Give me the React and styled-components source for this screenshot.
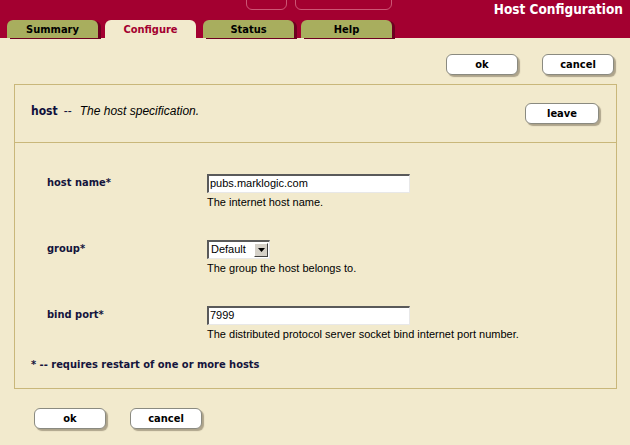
import React from "react";
import styled, { createGlobalStyle } from "styled-components";

const Global = createGlobalStyle`
  html, body { margin: 0; padding: 0; background: #f2eacd; }
  body { width: 630px; height: 445px; overflow: hidden; font-family: "Liberation Sans", Arial, sans-serif; }
`;

const tahoma = `"DejaVu Sans Condensed", "DejaVu Sans", Verdana, sans-serif`;

const Page = styled.div`
  display: flex;
  flex-direction: column;
  width: 630px;
  height: 445px;
  background: #f2eacd;
`;

const Header = styled.div`
  background: #a30030;
  height: 38px;
  display: flex;
  flex-direction: column;
`;

const TopRow = styled.div`
  height: 20px;
  display: flex;
  align-items: flex-start;
  padding-left: 246px;
  padding-right: 7px;
`;

const Deco = styled.div`
  width: ${(p) => p.$w}px;
  height: 16px;
  margin-top: -8px;
  margin-right: ${(p) => p.$mr || 0}px;
  border: 1px solid rgba(255, 190, 200, 0.45);
  border-radius: 6px;
`;

const Title = styled.div`
  margin-left: auto;
  margin-top: 1px;
  color: #ffffff;
  font-family: ${tahoma};
  font-stretch: condensed;
  font-weight: bold;
  font-size: 13.5px;
  line-height: 16px;
`;

const TabRow = styled.div`
  height: 18px;
  display: flex;
  gap: 7px;
  padding-left: 7px;
`;

const Tab = styled.div`
  width: 91px;
  height: 18px;
  border-radius: 6px 6px 0 0;
  background: ${(p) => (p.$active ? "#f2eacd" : "#a8ae5e")};
  box-shadow: ${(p) => (p.$active ? "none" : "3px 1px 0 #6e0020")};
  color: ${(p) => (p.$active ? "#a30030" : "#000000")};
  font-family: ${tahoma};
  font-stretch: condensed;
  font-weight: bold;
  font-size: 11px;
  display: flex;
  align-items: center;
  justify-content: center;
  padding-top: 1px;
  box-sizing: border-box;
`;

const ButtonBar = styled.div`
  display: flex;
  gap: 24px;
  justify-content: ${(p) => (p.$left ? "flex-start" : "flex-end")};
  padding: ${(p) => (p.$left ? "0 0 0 34px" : "0 16px 0 0")};
  margin-top: ${(p) => p.$mt}px;
`;

const Button = styled.button`
  width: ${(p) => p.$w || 72}px;
  height: 21px;
  box-sizing: border-box;
  background: #ffffff;
  border: 1px solid #8a8a80;
  border-radius: 6px;
  box-shadow: 2px 2px 1px rgba(90, 80, 60, 0.45);
  font-family: ${tahoma};
  font-stretch: condensed;
  font-weight: bold;
  font-size: 11px;
  color: #000;
  padding: 0;
  cursor: pointer;
  margin-left: ${(p) => (p.$push ? "auto" : "0")};
`;

const Panel = styled.div`
  margin: 9px 13px 0 14px;
  border: 1px solid #c9b77a;
  display: flex;
  flex-direction: column;
`;

const PanelHead = styled.div`
  height: 57px;
  border-bottom: 1px solid #c9b77a;
  display: flex;
  align-items: center;
  padding: 0 17px 0 16px;
`;

const HeadText = styled.div`
  display: flex;
  align-items: baseline;
  gap: 6px;
  margin-top: -5px;
`;

const HeadName = styled.span`
  font-family: ${tahoma};
  font-stretch: condensed;
  font-weight: bold;
  font-size: 12px;
  color: #10103c;
`;

const Dash = styled.span`
  font-size: 12px;
  color: #10103c;
  margin-right: 2px;
`;

const HeadDesc = styled.span`
  font-style: italic;
  font-size: 12px;
  color: #000;
`;

const PanelBody = styled.div`
  padding: 31px 16px 17px 16px;
  display: flex;
  flex-direction: column;
`;

const Row = styled.div`
  display: grid;
  grid-template-columns: 160px 1fr;
  height: 66px;
  padding-left: 16px;
`;

const Label = styled.div`
  font-family: ${tahoma};
  font-stretch: condensed;
  font-weight: bold;
  font-size: 11px;
  color: #14143c;
  padding-top: 2px;
`;

const Field = styled.div`
  display: flex;
  flex-direction: column;
  align-items: flex-start;
`;

const Input = styled.div`
  width: 203px;
  height: 19px;
  box-sizing: border-box;
  background: #fff;
  border-style: solid;
  border-width: 2px 1px 1px 2px;
  border-color: #5a5a5a #e8e8e8 #e8e8e8 #5a5a5a;
  font-size: 11px;
  line-height: 15px;
  padding-left: 1px;
  color: #000;
`;

const Select = styled.div`
  width: 63px;
  height: 19px;
  box-sizing: border-box;
  background: #fff;
  border-style: solid;
  border-width: 2px 1px 1px 2px;
  border-color: #5a5a5a #e8e8e8 #e8e8e8 #5a5a5a;
  display: flex;
  align-items: stretch;
  font-size: 11px;
  color: #000;
`;

const SelectText = styled.div`
  flex: 1;
  line-height: 15px;
  padding-left: 2px;
`;

const SelectBtn = styled.div`
  width: 14px;
  margin: 1px;
  background: #d4d0c8;
  border-style: solid;
  border-width: 1px;
  border-color: #ffffff #404040 #404040 #ffffff;
  box-sizing: border-box;
  display: flex;
  align-items: center;
  justify-content: center;
`;

const Hint = styled.div`
  font-size: 11px;
  color: #000;
  margin-top: 3px;
`;

const Note = styled.div`
  font-family: ${tahoma};
  font-stretch: condensed;
  font-weight: bold;
  font-size: 11px;
  color: #14143c;
  margin-top: -14px;
`;

const rows = [
  { label: "host name*", kind: "input", value: "pubs.marklogic.com", hint: "The internet host name." },
  { label: "group*", kind: "select", value: "Default", hint: "The group the host belongs to." },
  { label: "bind port*", kind: "input", value: "7999", hint: "The distributed protocol server socket bind internet port number." },
];

export default function App() {
  return (
    <Page>
      <Global />
      <Header>
        <TopRow>
          <Deco $w={39} $mr={8} />
          <Deco $w={95} />
          <Title>Host Configuration</Title>
        </TopRow>
        <TabRow>
          <Tab>Summary</Tab>
          <Tab $active>Configure</Tab>
          <Tab>Status</Tab>
          <Tab>Help</Tab>
        </TabRow>
      </Header>
      <ButtonBar $mt={16}>
        <Button>ok</Button>
        <Button>cancel</Button>
      </ButtonBar>
      <Panel>
        <PanelHead>
          <HeadText>
            <HeadName>host</HeadName>
            <Dash>--</Dash>
            <HeadDesc>The host specification.</HeadDesc>
          </HeadText>
          <Button $w={74} $push>leave</Button>
        </PanelHead>
        <PanelBody>
          {rows.map((r) => (
            <Row key={r.label}>
              <Label>{r.label}</Label>
              <Field>
                {r.kind === "input" ? (
                  <Input>{r.value}</Input>
                ) : (
                  <Select>
                    <SelectText>{r.value}</SelectText>
                    <SelectBtn>
                      <svg width="7" height="4" viewBox="0 0 7 4">
                        <path d="M0 0 H7 L3.5 4 Z" fill="#000" />
                      </svg>
                    </SelectBtn>
                  </Select>
                )}
                <Hint>{r.hint}</Hint>
              </Field>
            </Row>
          ))}
          <Note>* -- requires restart of one or more hosts</Note>
        </PanelBody>
      </Panel>
      <ButtonBar $left $mt={19}>
        <Button>ok</Button>
        <Button>cancel</Button>
      </ButtonBar>
    </Page>
  );
}
